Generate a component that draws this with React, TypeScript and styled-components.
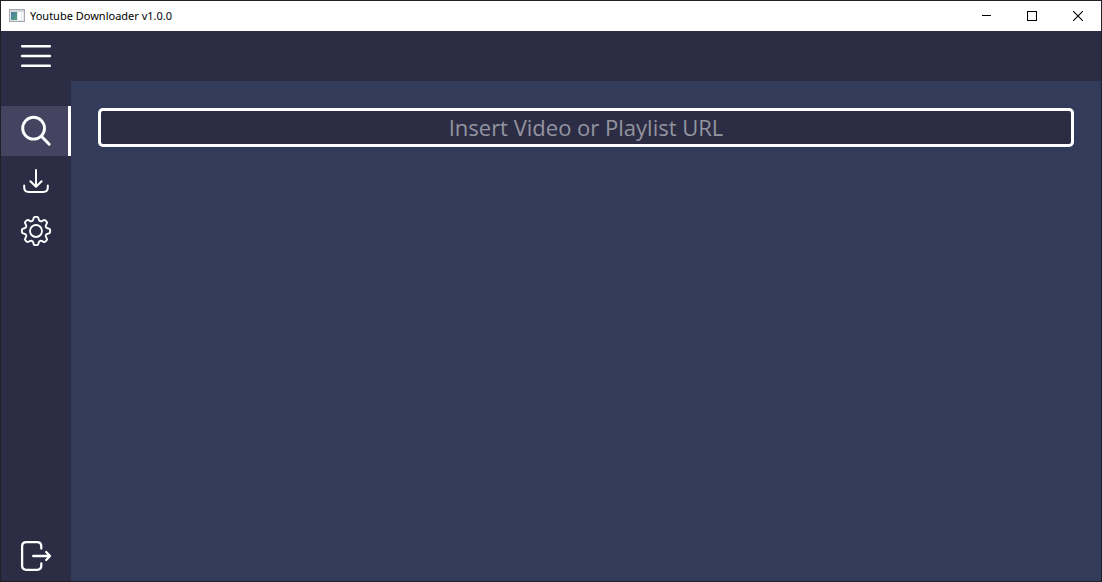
import React from "react";
import styled, { createGlobalStyle } from "styled-components";

const colors = {
  frame: "#202126",
  bar: "#2c2d44",
  page: "#333b5a",
  active: "#444360",
  hint: "#93949f",
};

const GlobalStyle = createGlobalStyle`
  * { box-sizing: border-box; }
  body { margin: 0; background: ${colors.frame}; }
  button, input { font: inherit; margin: 0; }
`;

const Window = styled.div`
  display: flex;
  flex-direction: column;
  min-height: 100vh;
  border: 1px solid ${colors.frame};
  background: ${colors.bar};
  font-family: "Noto Sans", "Open Sans", sans-serif;
`;

const TitleBar = styled.header`
  display: flex;
  align-items: center;
  height: 30px;
  padding-left: 8px;
  background: #fff;
  color: #000;
`;

const Title = styled.h1`
  flex: 1;
  margin: 0 0 0 5px;
  font-size: 11px;
  font-weight: 400;
  line-height: 16px;
`;

const WindowButton = styled.button`
  display: flex;
  align-items: center;
  justify-content: center;
  width: 46px;
  height: 30px;
  padding: 0;
  border: 0;
  background: none;
  color: #000;
`;

const TopBar = styled.div`
  height: 50px;
`;

const Body = styled.div`
  display: flex;
  flex: 1;
`;

const Sidebar = styled.nav`
  display: flex;
  flex-direction: column;
  justify-content: space-between;
  width: 70px;
  padding-top: 25px;
`;

const NavButton = styled.button<{ $active?: boolean }>`
  display: flex;
  align-items: center;
  justify-content: center;
  width: 70px;
  height: 50px;
  padding: 0;
  border: 0;
  background: ${(p) => (p.$active ? colors.active : "none")};
  box-shadow: ${(p) => (p.$active ? "inset -3px 0 0 #fff" : "none")};
  color: #fff;
`;

const Page = styled.main`
  flex: 1;
  padding: 27px;
  background: ${colors.page};
`;

const UrlInput = styled.input`
  display: block;
  width: 100%;
  height: 39px;
  padding: 0 8px 2px;
  border: 3px solid #fff;
  border-radius: 5px;
  outline: none;
  background: ${colors.bar};
  color: #fff;
  font-family: "Open Sans", sans-serif;
  font-size: 22px;
  text-align: center;

  &::placeholder {
    color: ${colors.hint};
    opacity: 1;
  }
`;

const IconSvg = styled.svg`
  display: block;
  overflow: visible;
  fill: none;
  stroke: currentColor;
  stroke-linecap: round;
  stroke-linejoin: round;
`;

function Icon({ weight, children }: { weight: number; children: React.ReactNode }) {
  return (
    <IconSvg width="30" height="30" viewBox="0 0 30 30" strokeWidth={weight} aria-hidden="true">
      {children}
    </IconSvg>
  );
}

// Eight blunt teeth with rounded corners, joined by rounded valleys.
function gearPath() {
  let d = "";
  for (let i = 0; i < 8; i++) {
    const a = (i * Math.PI) / 4;
    const at = (x: number, y: number) =>
      `${(15 + x * Math.cos(a) + y * Math.sin(a)).toFixed(2)} ${(15 + x * Math.sin(a) - y * Math.cos(a)).toFixed(2)}`;
    d += i === 0 ? `M${at(-2.7, 11.6)}` : `A2.3 2.3 0 0 0 ${at(-2.7, 11.6)}`;
    d += `L${at(-2.4, 12.9)}Q${at(-2.1, 14.1)} ${at(-1, 14.1)}L${at(1, 14.1)}`;
    d += `Q${at(2.1, 14.1)} ${at(2.4, 12.9)}L${at(2.7, 11.6)}`;
  }
  return d + "A2.3 2.3 0 0 0 12.3 3.4Z";
}

export default function App() {
  return (
    <>
      <GlobalStyle />
      <Window>
        <TitleBar>
          <svg width="16" height="14" viewBox="0 0 16 14" aria-hidden="true">
            <defs>
              <linearGradient id="pane" x1="0" y1="0" x2="1" y2="1">
                <stop offset="0" stopColor="#4c78a8" />
                <stop offset="1" stopColor="#4fa678" />
              </linearGradient>
            </defs>
            <rect x="0.5" y="0.5" width="15" height="12" fill="#e3e6e8" stroke="#a5a9ad" />
            <rect x="1" y="1" width="14" height="2" fill="#d5d9dc" />
            <rect x="2" y="3" width="6" height="8" fill="url(#pane)" />
            <rect x="9" y="3" width="3" height="8" fill="#fff" />
            <rect x="13" y="3" width="1" height="8" fill="#fff" />
          </svg>
          <Title>Youtube Downloader v1.0.0</Title>
          <WindowButton aria-label="Minimize">
            <svg width="10" height="10" shapeRendering="crispEdges">
              <rect x="1" y="4" width="10" height="1" overflow="visible" />
            </svg>
          </WindowButton>
          <WindowButton aria-label="Maximize">
            <svg width="10" height="10" shapeRendering="crispEdges">
              <rect x="0.5" y="0.5" width="9" height="9" fill="none" stroke="currentColor" />
            </svg>
          </WindowButton>
          <WindowButton aria-label="Close">
            <svg width="10" height="10">
              <path d="M0 0L10 10M10 0L0 10" stroke="currentColor" strokeWidth="1.1" />
            </svg>
          </WindowButton>
        </TitleBar>
        <TopBar>
          <NavButton aria-label="Menu">
            <Icon weight={2.6}>
              <path d="M1.2 5.3H28.8M1.2 15H28.8M1.2 24.7H28.8" />
            </Icon>
          </NavButton>
        </TopBar>
        <Body>
          <Sidebar>
            <div>
              <NavButton $active aria-label="Search" aria-current="page">
                <Icon weight={2.9}>
                  <circle cx="12.6" cy="12.2" r="10.9" />
                  <path d="M20.6 20.4L28.2 28.2" />
                </Icon>
              </NavButton>
              <NavButton aria-label="Downloads">
                <Icon weight={2}>
                  <path d="M15 4V20.6M9.4 15.2L15 20.7L20.6 15.2" />
                  <path d="M3.2 19.4V21.6Q3.2 26 7.6 26H22.4Q26.8 26 26.8 21.6V19.4" />
                </Icon>
              </NavButton>
              <NavButton aria-label="Settings">
                <Icon weight={1.9}>
                  <path d={gearPath()} />
                  <circle cx="15" cy="15" r="6" strokeWidth="1.8" />
                </Icon>
              </NavButton>
            </div>
            <NavButton aria-label="Exit">
              <Icon weight={2.3}>
                <path d="M20.3 7.6V5.4Q20.3 1.1 16 1.1H5.4Q1.1 1.1 1.1 5.4V24.6Q1.1 28.9 5.4 28.9H16Q20.3 28.9 20.3 24.6V22.4" />
                <path d="M12.2 15H28.6M25.2 11L29 15L25.2 19" />
              </Icon>
            </NavButton>
          </Sidebar>
          <Page>
            <UrlInput
              type="url"
              aria-label="Video or playlist URL"
              placeholder="Insert Video or Playlist URL"
            />
          </Page>
        </Body>
      </Window>
    </>
  );
}
